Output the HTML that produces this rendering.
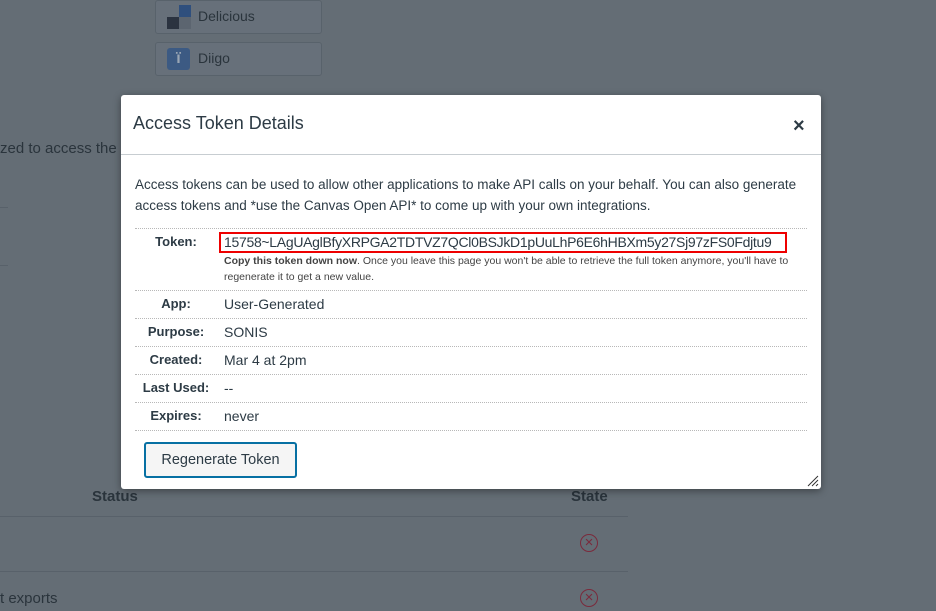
<!DOCTYPE html>
<html><head><style>
body{margin:0;width:936px;height:611px;overflow:hidden;background:#646d75;font-family:"Liberation Sans",sans-serif;position:relative;color:#2d3b45}
.a{position:absolute}
.bg{color:#2a343c}
.btnbg{position:absolute;left:155px;width:167px;height:34px;border:1px solid #58626b;border-radius:3px;background:#67707a;box-sizing:border-box}
.modal{position:absolute;left:121px;top:95px;width:700px;height:394px;background:#fff;border-radius:3px;box-shadow:0 2px 8px rgba(0,0,0,.4)}
.row{position:absolute;left:14px;width:672px;border-top:1px dotted #b8b8b8;font-size:14px}
.lbl{position:absolute;left:0;width:82px;text-align:center;font-weight:bold;color:#2d3b45;font-size:13px}
.val{position:absolute;left:89px;font-size:14px;color:#2d3b45}
.x{position:absolute;width:16px;height:16px;border:1.5px solid #7a2a3c;border-radius:50%;color:#7a2a3c;font-size:15px;text-align:center;line-height:15px}
</style></head><body>
<div class="btnbg" style="top:0"></div>
<div class="a" style="left:167px;top:17px;width:12px;height:12px;background:#2b3340"></div>
<div class="a" style="left:179px;top:5px;width:12px;height:12px;background:#2f4f7d"></div>
<div class="a" style="left:179px;top:17px;width:12px;height:12px;background:#5c6570"></div>
<div class="a bg" style="left:198px;top:8px;font-size:14px">Delicious</div>
<div class="btnbg" style="top:42px"></div>
<div class="a" style="left:167px;top:48px;width:23px;height:22px;background:#3c5a83;border-radius:3px;color:#9aa6b4;font-weight:bold;font-size:16px;text-align:center;line-height:22px">ï</div>
<div class="a bg" style="left:198px;top:50px;font-size:14px">Diigo</div>
<div class="a bg" style="left:0;top:140px;font-size:15px">zed to access the</div>
<div class="a" style="left:0;top:207px;width:8px;border-top:1px solid #58616a"></div>
<div class="a" style="left:0;top:265px;width:8px;border-top:1px solid #58616a"></div>
<div class="a bg" style="left:92px;top:488px;font-size:15px;font-weight:bold">Status</div>
<div class="a bg" style="left:571px;top:488px;font-size:15px;font-weight:bold">State</div>
<div class="a" style="left:0;top:516px;width:628px;border-top:1px solid #58616a"></div>
<div class="a" style="left:0;top:571px;width:628px;border-top:1px solid #58616a"></div>
<div class="a bg" style="left:0;top:590px;font-size:15px">t exports</div>
<div class="x" style="left:580px;top:534px">×</div>
<div class="x" style="left:580px;top:589px">×</div>

<div class="modal">
<div class="a" style="left:12px;top:18px;font-size:18px;color:#2d3b45">Access Token Details</div>
<div class="a" style="left:672px;top:20px;font-size:20px;font-weight:bold;color:#2d3b45">×</div>
<div class="a" style="left:0;top:59px;width:700px;border-top:1px solid #c7cdd1"></div>
<div class="a" style="left:14px;top:79px;width:680px;font-size:13.5px;line-height:21px;color:#2d3b45">Access tokens can be used to allow other applications to make API calls on your behalf. You can also generate access tokens and *use the Canvas Open API* to come up with your own integrations.</div>
<div class="row" style="top:133px;height:62px">
 <div class="lbl" style="top:5px">Token:</div>
 <div class="a" style="left:84px;top:3px;width:568px;height:21px;border:2px solid #e00;box-sizing:border-box"></div>
 <div class="val" style="top:5px;left:89px;font-size:14px;letter-spacing:-0.3px">15758~LAgUAglBfyXRPGA2TDTVZ7QCl0BSJkD1pUuLhP6E6hHBXm5y27Sj97zFS0Fdjtu9</div>
 <div class="val" style="top:24px;font-size:10.5px;line-height:16px;width:590px;color:#444"><b>Copy this token down now</b>. Once you leave this page you won't be able to retrieve the full token anymore, you'll have to regenerate it to get a new value.</div>
</div>
<div class="row" style="top:195px"><div class="lbl" style="top:5px">App:</div><div class="val" style="top:5px">User-Generated</div></div>
<div class="row" style="top:223px"><div class="lbl" style="top:5px">Purpose:</div><div class="val" style="top:5px">SONIS</div></div>
<div class="row" style="top:251px"><div class="lbl" style="top:5px">Created:</div><div class="val" style="top:5px">Mar 4 at 2pm</div></div>
<div class="row" style="top:279px"><div class="lbl" style="top:5px">Last Used:</div><div class="val" style="top:5px">--</div></div>
<div class="row" style="top:307px"><div class="lbl" style="top:5px">Expires:</div><div class="val" style="top:5px">never</div></div>
<div class="row" style="top:335px"></div>
<div class="a" style="left:23px;top:347px;width:153px;height:36px;border:2px solid #0770a3;border-radius:3px;background:#f5f5f5;box-sizing:border-box;font-size:14.5px;text-align:center;line-height:32px;color:#2d3b45">Regenerate Token</div>
<svg class="a" style="left:686px;top:380px" width="12" height="12"><path d="M1 11L11 1M5 11L11 5M9 11L11 9" stroke="#333" stroke-width="1"/></svg>
</div>
</body></html>
